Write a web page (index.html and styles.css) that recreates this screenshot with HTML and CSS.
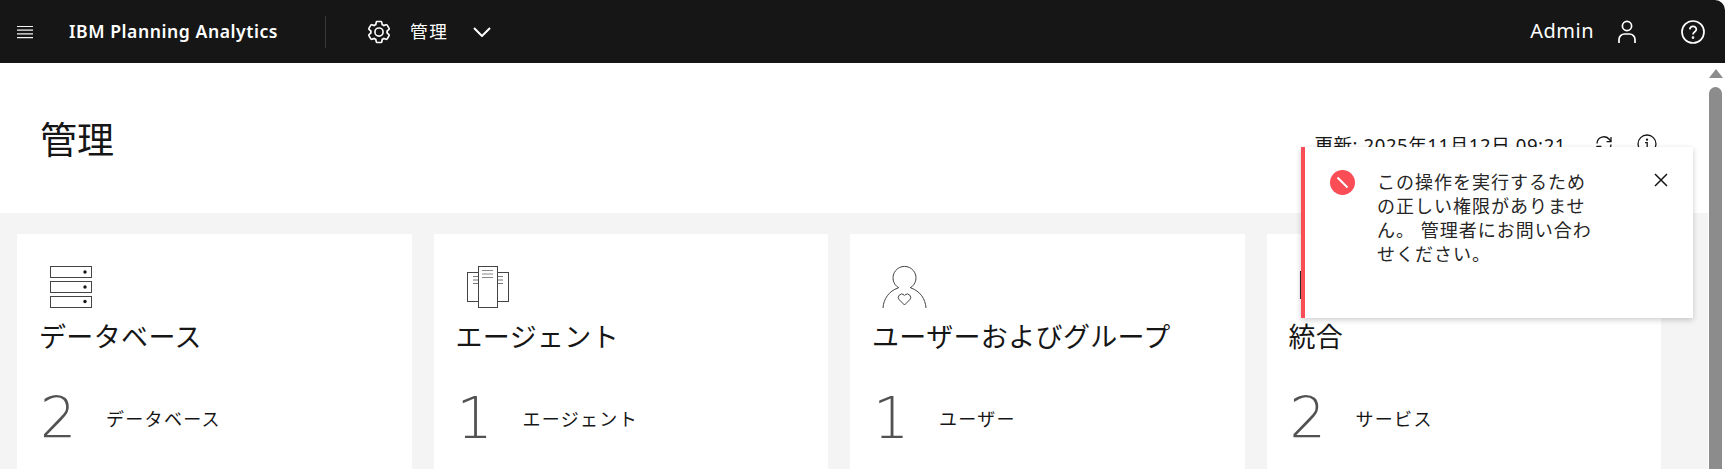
FILE: index.html
```html
<!DOCTYPE html>
<html lang="ja">

<head>
    <meta charset="UTF-8">
    <meta name="viewport" content="width=device-width, initial-scale=1.0">
    <title>IBM Planning Analytics</title>
    <link rel="stylesheet" href="styles.css">
</head>

<body>
    <header class="topbar">
        <svg class="menu-icon" width="16" height="14" viewBox="0 0 16 14" fill="none" stroke="#f4f4f4" stroke-width="1.2">
            <path d="M0 1.5h16M0 5.2h16M0 8.9h16M0 12.6h16" />
        </svg>
        <span class="product">IBM Planning Analytics</span>
        <span class="divider"></span>
        <svg class="gear-icon" width="26" height="26" viewBox="0 0 32 32" fill="#fff">
            <path d="M27 16.76V15.24l1.92-1.68A2 2 0 0 0 29.3 11l-2.36-4a2 2 0 0 0-1.73-1 2 2 0 0 0-.64.1l-2.43.82a11.35 11.35 0 0 0-1.31-.75l-.51-2.52a2 2 0 0 0-2-1.61h-4.68a2 2 0 0 0-2 1.61l-.51 2.52a11.48 11.48 0 0 0-1.32.75l-2.38-.86A2 2 0 0 0 6.79 6a2 2 0 0 0-1.73 1L2.7 11a2 2 0 0 0 .41 2.51L5 15.24v1.52l-1.89 1.68A2 2 0 0 0 2.7 21l2.36 4a2 2 0 0 0 1.73 1 2 2 0 0 0 .64-.1l2.43-.82a11.35 11.35 0 0 0 1.31.75l.51 2.52a2 2 0 0 0 2 1.61h4.72a2 2 0 0 0 2-1.61l.51-2.52a11.48 11.48 0 0 0 1.32-.75l2.42.82a2 2 0 0 0 .64.1 2 2 0 0 0 1.73-1l2.28-4a2 2 0 0 0-.41-2.51ZM25.21 24l-3.43-1.16a8.86 8.86 0 0 1-2.71 1.57L18.36 28h-4.72l-.71-3.55a9.36 9.36 0 0 1-2.7-1.57L6.79 24l-2.36-4 2.72-2.4a8.9 8.9 0 0 1 0-3.13L4.43 12l2.36-4 3.43 1.16a8.86 8.86 0 0 1 2.71-1.57L13.64 4h4.72l.71 3.55a9.36 9.36 0 0 1 2.7 1.57L25.21 8l2.36 4-2.72 2.4a8.9 8.9 0 0 1 0 3.13L27.57 20Z" />
            <path d="M16 22a6 6 0 1 1 6-6 5.94 5.94 0 0 1-6 6Zm0-10a3.91 3.91 0 0 0-4 4 3.91 3.91 0 0 0 4 4 3.91 3.91 0 0 0 4-4 3.91 3.91 0 0 0-4-4Z" />
        </svg>
        <span class="section-name">管理</span>
        <svg class="chevron" width="18" height="10" viewBox="0 0 18 10" fill="none" stroke="#fff" stroke-width="2">
            <path d="M1 1l8 8 8-8" />
        </svg>
        <div class="topbar-right">
            <span class="user-name">Admin</span>
            <svg class="user-icon" width="20" height="24" viewBox="0 0 20 24" fill="none" stroke="#fff" stroke-width="1.7">
                <circle cx="10" cy="6" r="4.6" />
                <path d="M2 23v-3.5a5.5 5.5 0 0 1 5.5-5.5h5a5.5 5.5 0 0 1 5.5 5.5V23" />
            </svg>
            <svg class="help-icon" width="26" height="26" viewBox="0 0 26 26" fill="none" stroke="#fff" stroke-width="1.7">
                <circle cx="13" cy="13" r="11" />
                <path d="M9.8 10.4a3.3 3.3 0 0 1 3.3-3 3.1 3.1 0 0 1 3.2 3c0 2.4-3.3 2.3-3.3 5.2" />
                <circle cx="13" cy="18.6" r=".5" fill="#fff" />
            </svg>
        </div>
    </header>

    <div class="page">
        <main class="content">
            <section class="page-head">
                <h1>管理</h1>
                <div class="page-meta">
                    <span class="updated">更新: 2025年11月12日 09:21</span>
                    <svg class="refresh-icon" width="20" height="20" viewBox="0 0 20 20" fill="none" stroke="#161616" stroke-width="1.3">
                        <path d="M3 9.5A7 7 0 0 1 15.5 5.5L17 7.5M17 10.5A7 7 0 0 1 4.5 14.5L3 12.5" />
                        <path d="M17 3v4.6h-4.4M3 17v-4.6h4.4" />
                    </svg>
                    <svg class="info-icon" width="20" height="20" viewBox="0 0 20 20" fill="none" stroke="#161616" stroke-width="1.3">
                        <circle cx="10" cy="10" r="9" />
                        <path d="M8 8.7h2.2v5.6M7.6 14.4h5" />
                        <circle cx="10" cy="5.7" r=".5" fill="#161616" />
                    </svg>
                </div>
            </section>

            <section class="cards">
                <article class="card">
                    <svg class="card-icon" width="62" height="48" viewBox="0 0 62 48" fill="#fff" stroke="#444" stroke-width="1">
                        <rect x="10.5" y="4.5" width="41" height="11" />
                        <rect x="10.5" y="19.5" width="41" height="11" />
                        <rect x="10.5" y="34.5" width="41" height="11" />
                        <circle cx="45" cy="10" r="1.7" fill="#161616" stroke="none" />
                        <circle cx="45" cy="25" r="1.7" fill="#161616" stroke="none" />
                        <circle cx="45" cy="39.5" r="1.7" fill="#161616" stroke="none" />
                    </svg>
                    <h2>データベース</h2>
                    <div class="stat">
                        <span class="stat-num">2</span>
                        <span class="stat-label">データベース</span>
                    </div>
                </article>

                <article class="card">
                    <svg class="card-icon" width="62" height="48" viewBox="0 0 62 48" fill="#fff" stroke="#444" stroke-width="1">
                        <rect x="10.5" y="10.5" width="41" height="29" />
                        <path d="M16 14.5h5M16 18h5M16 21.5h5M41 14.5h5M41 18h5M41 21.5h5" stroke="#777" />
                        <rect x="21.5" y="4.5" width="19" height="41" />
                        <path d="M25 8.5h11M25 12h11M25 15.5h11" stroke="#888" />
                    </svg>
                    <h2>エージェント</h2>
                    <div class="stat">
                        <span class="stat-num">1</span>
                        <span class="stat-label">エージェント</span>
                    </div>
                </article>

                <article class="card">
                    <svg class="card-icon" width="62" height="48" viewBox="0 0 62 48" fill="none" stroke="#444" stroke-width="1">
                        <path d="M26 26a11.5 11.5 0 1 1 11 0" />
                        <path d="M10 46c.5-9 6-17 15-20M53 46c-.5-9-6-17-15-20" />
                        <path d="M31.5 43l-5.3-5.3a3.4 3.4 0 0 1 4.8-4.8l.5.5.5-.5a3.4 3.4 0 0 1 4.8 4.8Z" />
                    </svg>
                    <h2>ユーザーおよびグループ</h2>
                    <div class="stat">
                        <span class="stat-num">1</span>
                        <span class="stat-label">ユーザー</span>
                    </div>
                </article>

                <article class="card">
                    <svg class="card-icon" width="62" height="48" viewBox="0 0 62 48" fill="#fff" stroke="#333" stroke-width="1.5">
                        <path d="M10.7 9v28" />
                    </svg>
                    <h2>統合</h2>
                    <div class="stat">
                        <span class="stat-num">2</span>
                        <span class="stat-label">サービス</span>
                    </div>
                </article>
            </section>
        </main>

        <aside class="scrollbar">
            <span class="scroll-arrow"></span>
            <span class="scroll-thumb"></span>
        </aside>

        <div class="toast">
            <svg class="toast-icon" width="25" height="25" viewBox="0 0 25 25">
                <circle cx="12.5" cy="12.5" r="12.5" fill="#fa4d56" />
                <path d="M7.5 7.5l10 10" stroke="#fff" stroke-width="2" />
            </svg>
            <p class="toast-text">この操作を実行するための正しい権限がありません。 管理者にお問い合わせください。</p>
            <svg class="toast-close" width="14" height="14" viewBox="0 0 14 14" fill="none" stroke="#161616" stroke-width="1.5">
                <path d="M1 1l12 12M13 1L1 13" />
            </svg>
        </div>
    </div>
</body>

</html>
```

FILE: styles.css
```css
* {
    box-sizing: border-box;
}

html,
body {
    height: 100%;
}

body {
    margin: 0;
    overflow: hidden;
    background: #fff;
    color: #161616;
    font-family: "Noto Sans", "Noto Sans CJK JP", sans-serif;
}

.topbar {
    height: 63px;
    display: flex;
    align-items: center;
    background: #161616;
    color: #fff;
    border-top-right-radius: 10px;
}

.menu-icon {
    margin-left: 17px;
    flex: none;
}

.product {
    margin: 0 0 2px 36px;
    width: 256px;
    font-size: 17.6px;
    font-weight: 600;
    letter-spacing: .55px;
    white-space: nowrap;
}

.divider {
    width: 1px;
    height: 32px;
    background: #393939;
}

.gear-icon {
    margin-left: 40px;
    flex: none;
}

.section-name {
    margin: 0 0 2px 18px;
    font-size: 17.6px;
    letter-spacing: 1.6px;
}

.chevron {
    margin-left: 25px;
    flex: none;
}

.topbar-right {
    margin-left: auto;
    padding-right: 19px;
    display: flex;
    align-items: center;
}

.user-name {
    margin-bottom: 2px;
    font-size: 20px;
    letter-spacing: .5px;
}

.user-icon {
    margin-left: 23px;
}

.help-icon {
    margin-left: 43px;
}

.page {
    position: relative;
    height: 406px;
    display: flex;
    overflow: hidden;
}

.content {
    flex: 1;
    background: #f4f4f4;
}

.page-head {
    height: 150px;
    padding: 0 51px 0 40px;
    background: #fff;
    display: flex;
    justify-content: space-between;
}

h1 {
    margin: 53px 0 0;
    font-size: 37px;
    font-weight: 400;
    line-height: 48px;
}

.page-meta {
    margin-top: 69px;
    height: 24px;
    display: flex;
    align-items: center;
    font-size: 18.5px;
}

.updated {
    letter-spacing: .6px;
}

.refresh-icon {
    margin-left: 28px;
}

.info-icon {
    margin-left: 23px;
}

.cards {
    padding: 21px 47px 0 17px;
    display: grid;
    grid-template-columns: repeat(4, 1fr);
    gap: 22px;
}

.card {
    height: 260px;
    padding: 28px 23px 0;
    background: #fff;
}

.card-icon {
    display: block;
}

h2 {
    margin: 9px 0 0 -1px;
    font-size: 27px;
    font-weight: 400;
    letter-spacing: .35px;
    line-height: 36px;
    white-space: nowrap;
}

.stat {
    margin-top: 31px;
    display: flex;
    align-items: center;
}

.stat-num {
    width: 66px;
    font-family: "DejaVu Sans", sans-serif;
    font-size: 57px;
    font-weight: 200;
    line-height: 64px;
    color: #525252;
}

.stat-label {
    font-size: 18px;
    letter-spacing: 1.3px;
    white-space: nowrap;
}

.scrollbar {
    width: 17px;
    flex: none;
    position: relative;
    background: #fff;
}

.scroll-arrow {
    display: block;
    margin: 6px 0 0 1px;
    width: 0;
    height: 0;
    border-left: 7px solid transparent;
    border-right: 7px solid transparent;
    border-bottom: 9px solid #8c8c8c;
}

.scroll-thumb {
    display: block;
    margin: 9px 0 0 1px;
    width: 13px;
    height: 400px;
    border-radius: 7px;
    background: #8c8c8c;
}

.toast {
    position: absolute;
    left: 1301px;
    top: 84px;
    width: 392px;
    height: 171px;
    padding: 23px 0 0 25px;
    display: flex;
    align-items: flex-start;
    background: #fff;
    border-left: 4px solid #fa4d56;
    box-shadow: 0 2px 6px rgba(0, 0, 0, .2);
}

.toast-icon {
    flex: none;
}

.toast-text {
    margin: 0 0 0 22px;
    width: 222px;
    font-size: 18px;
    letter-spacing: 1px;
    line-height: 24px;
    color: #262626;
}

.toast-close {
    margin: 3px 0 0 55px;
    flex: none;
}
```
